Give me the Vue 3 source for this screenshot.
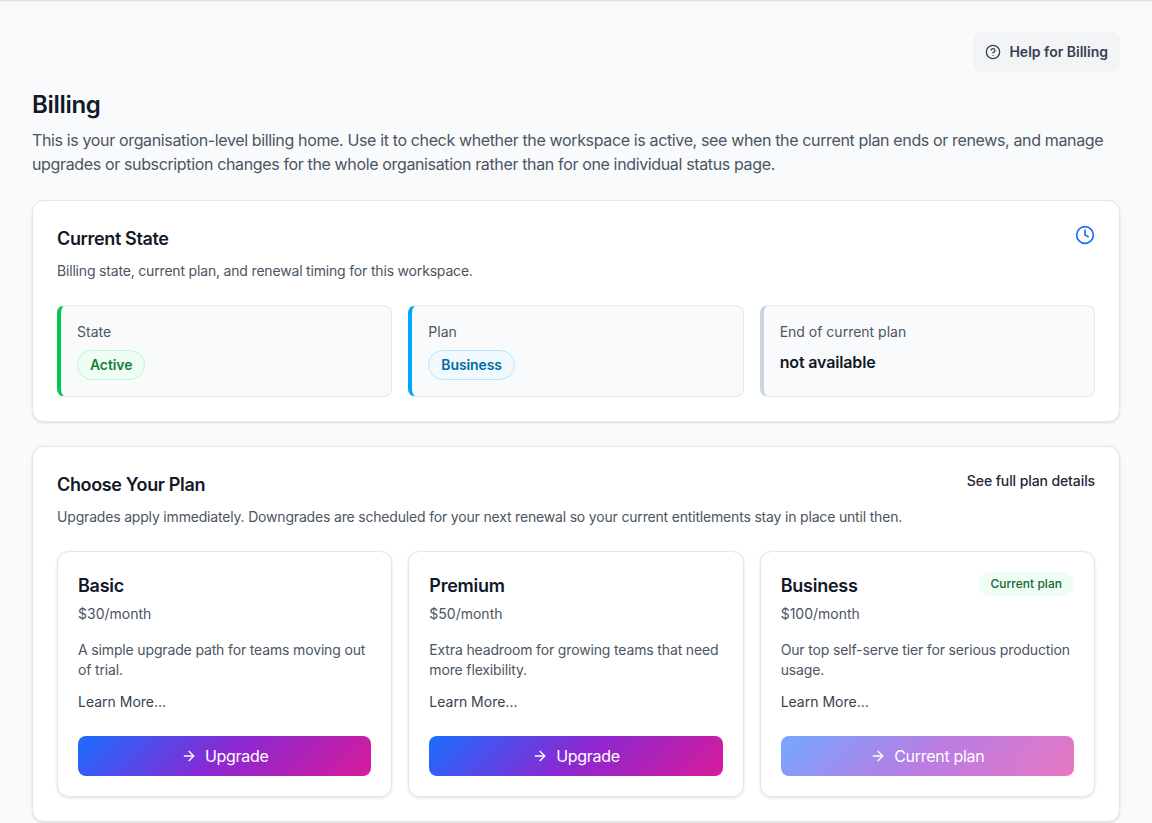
<script setup>
const stats = [
  { label: 'State', accent: 'green', badge: 'Active' },
  { label: 'Plan', accent: 'blue', badge: 'Business' },
  { label: 'End of current plan', accent: 'grey', value: 'not available' },
];

const plans = [
  {
    name: 'Basic',
    price: '$30/month',
    text: 'A simple upgrade path for teams moving out of trial.',
    action: 'Upgrade',
  },
  {
    name: 'Premium',
    price: '$50/month',
    text: 'Extra headroom for growing teams that need more flexibility.',
    action: 'Upgrade',
  },
  {
    name: 'Business',
    price: '$100/month',
    text: 'Our top self-serve tier for serious production usage.',
    action: 'Current plan',
    current: true,
  },
];
</script>

<template>
  <div class="page">
    <div class="topbar">
      <button class="help" type="button">
        <svg width="16" height="16" viewBox="0 0 24 24" fill="none" stroke="currentColor" stroke-width="2" stroke-linecap="round" stroke-linejoin="round">
          <circle cx="12" cy="12" r="10" />
          <path d="M9.09 9a3 3 0 0 1 5.83 1c0 2-3 3-3 3" />
          <path d="M12 17h.01" />
        </svg>
        Help for Billing
      </button>
    </div>

    <h1>Billing</h1>
    <p class="intro">
      This is your organisation-level billing home. Use it to check whether the workspace is active, see when the current plan ends or renews, and manage upgrades or subscription changes for the whole organisation rather than for one individual status page.
    </p>

    <section class="card state-card">
      <div class="card-head">
        <h2>Current State</h2>
        <svg class="clock" width="20" height="20" viewBox="0 0 24 24" fill="none" stroke="currentColor" stroke-width="2" stroke-linecap="round" stroke-linejoin="round">
          <circle cx="12" cy="12" r="10" />
          <path d="M12 6v6l4 2" />
        </svg>
      </div>
      <p class="sub">Billing state, current plan, and renewal timing for this workspace.</p>
      <div class="grid">
        <div v-for="stat in stats" :key="stat.label" class="stat" :class="`stat--${stat.accent}`">
          <div class="stat-label">{{ stat.label }}</div>
          <span v-if="stat.badge" class="badge" :class="`badge--${stat.accent}`">{{ stat.badge }}</span>
          <div v-else class="stat-value">{{ stat.value }}</div>
        </div>
      </div>
    </section>

    <section class="card">
      <div class="card-head">
        <h2>Choose Your Plan</h2>
        <a class="details">See full plan details</a>
      </div>
      <p class="sub">Upgrades apply immediately. Downgrades are scheduled for your next renewal so your current entitlements stay in place until then.</p>
      <div class="grid">
        <article v-for="plan in plans" :key="plan.name" class="plan">
          <div class="plan-head">
            <h3>{{ plan.name }}</h3>
            <span v-if="plan.current" class="current-tag">Current plan</span>
          </div>
          <div class="price">{{ plan.price }}</div>
          <p class="plan-text">{{ plan.text }}</p>
          <a class="learn">Learn More...</a>
          <button class="action" :class="{ 'is-current': plan.current }" type="button">
            <svg width="16" height="16" viewBox="0 0 24 24" fill="none" stroke="currentColor" stroke-width="2" stroke-linecap="round" stroke-linejoin="round">
              <path d="M5 12h14" />
              <path d="m12 5 7 7-7 7" />
            </svg>
            {{ plan.action }}
          </button>
        </article>
      </div>
    </section>
  </div>
</template>

<style>
html,
body {
  margin: 0;
  height: 100%;
  overflow: hidden;
  background: #f9fafb;
}
</style>

<style scoped>
.page {
  height: 823px;
  box-sizing: border-box;
  overflow: hidden;
  padding: 32px 32px 0;
  background: #f9fafb;
  box-shadow: inset 0 2px 2px -1px rgba(0, 0, 0, 0.14);
  font-family: Inter, "Liberation Sans", sans-serif;
  color: #111827;
}

.topbar {
  display: flex;
  justify-content: flex-end;
}

.help {
  display: inline-flex;
  align-items: center;
  gap: 8px;
  height: 40px;
  padding: 0 12px;
  border: 0;
  border-radius: 8px;
  background: #f3f4f6;
  color: #374151;
  font: 600 14px/20px Inter, sans-serif;
}

h1 {
  margin: 17px 0 0;
  font-size: 24px;
  line-height: 32px;
  font-weight: 600;
  letter-spacing: -0.3px;
}

.intro {
  margin: 7px 0 24px;
  font-size: 16px;
  line-height: 24px;
  letter-spacing: -0.36px;
  color: #4b5563;
}

.card {
  padding: 24px;
  background: #fff;
  border: 1px solid #e5e7eb;
  border-radius: 12px;
  box-shadow: 0 1px 3px rgba(0, 0, 0, 0.12);
}

.state-card {
  margin-bottom: 24px;
}

.card-head {
  display: flex;
  justify-content: space-between;
  align-items: flex-start;
}

h2 {
  margin: 0;
  font-size: 18px;
  line-height: 28px;
  font-weight: 600;
  letter-spacing: -0.35px;
}

.clock {
  color: #1a6dff;
}

.details {
  font-size: 14px;
  line-height: 20px;
  font-weight: 500;
  letter-spacing: -0.1px;
  color: #1f2937;
}

.sub {
  margin: 8px 0 24px;
  font-size: 14px;
  line-height: 20px;
  letter-spacing: -0.18px;
  color: #4b5563;
}

.grid {
  display: grid;
  grid-template-columns: repeat(3, 1fr);
  gap: 16px;
}

.stat {
  height: 92px;
  box-sizing: border-box;
  padding: 16px;
  background: #f9fafb;
  border: 1px solid #e5e7eb;
  border-left-width: 4px;
  border-radius: 8px;
}

.stat--green {
  border-left-color: #00c853;
}

.stat--blue {
  border-left-color: #00a6fb;
}

.stat--grey {
  border-left-color: #cbd5e1;
}

.stat-label {
  font-size: 14px;
  line-height: 20px;
  color: #4b5563;
}

.stat-value {
  margin-top: 8px;
  font-size: 16px;
  line-height: 24px;
  font-weight: 600;
  letter-spacing: -0.15px;
}

.badge {
  display: inline-block;
  margin-top: 8px;
  padding: 4px 12px;
  border: 1px solid;
  border-radius: 999px;
  font-size: 14px;
  line-height: 20px;
  font-weight: 600;
  letter-spacing: -0.1px;
}

.badge--green {
  background: #f0fdf4;
  border-color: #bbf7d0;
  color: #15803d;
}

.badge--blue {
  background: #f0f9ff;
  border-color: #bae6fd;
  color: #0369a1;
}

.plan {
  display: flex;
  flex-direction: column;
  height: 246px;
  box-sizing: border-box;
  padding: 20px;
  background: #fff;
  border: 1px solid #e5e7eb;
  border-radius: 12px;
  box-shadow: 0 1px 3px rgba(0, 0, 0, 0.12);
}

.plan-head {
  display: flex;
  justify-content: space-between;
  align-items: flex-start;
}

h3 {
  margin: 0;
  font-size: 18px;
  line-height: 28px;
  font-weight: 600;
  letter-spacing: -0.25px;
}

.current-tag {
  padding: 2px 12px;
  border-radius: 999px;
  background: #f0fdf4;
  color: #166534;
  font-size: 12px;
  line-height: 20px;
  font-weight: 500;
  letter-spacing: 0.03px;
}

.price {
  margin-top: 4px;
  font-size: 14px;
  line-height: 20px;
  font-weight: 400;
  color: #4b5563;
}

.plan-text {
  margin: 16px 0 0;
  font-size: 14px;
  line-height: 20px;
  letter-spacing: -0.15px;
  color: #4b5563;
}

.learn {
  margin-top: 12px;
  font-size: 14px;
  line-height: 20px;
  font-weight: 400;
  color: #374151;
}

.action {
  display: flex;
  align-items: center;
  justify-content: center;
  gap: 8px;
  height: 40px;
  margin-top: auto;
  border: 0;
  border-radius: 8px;
  background: linear-gradient(135deg, #1a6dff 0%, #8b28d2 50%, #d81b9a 100%);
  color: #fff;
  font: 400 16px/24px Inter, sans-serif;
  letter-spacing: -0.3px;
}

.action.is-current {
  opacity: 0.6;
}
</style>
